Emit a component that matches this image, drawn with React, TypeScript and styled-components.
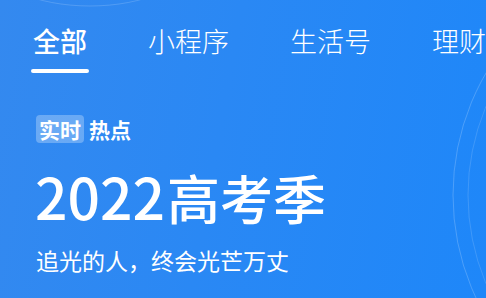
import React from "react";
import styled, { createGlobalStyle } from "styled-components";

const Global = createGlobalStyle`
  html, body { margin: 0; padding: 0; }
  body { font-family: "Noto Sans CJK SC", "Noto Sans", sans-serif; }
`;

const Banner = styled.div`
  position: relative;
  width: 486px;
  height: 298px;
  overflow: hidden;
  background: linear-gradient(100deg, #3489ef 0%, #2a88f4 45%, #1e87f9 100%);
  color: #fff;
  display: flex;
  flex-direction: column;
  padding: 26px 0 0 33px;
  box-sizing: border-box;
`;

const Decor = styled.svg`
  position: absolute;
  inset: 0;
  pointer-events: none;
`;

const Tabs = styled.nav`
  display: flex;
  gap: 61px;
  white-space: nowrap;
`;

const Tab = styled.div<{ $active?: boolean }>`
  position: relative;
  font-size: 27px;
  line-height: 30px;
  font-weight: ${(p) => (p.$active ? 500 : 300)};
  padding-bottom: 17px;
  &::after {
    content: "";
    display: ${(p) => (p.$active ? "block" : "none")};
    position: absolute;
    left: -2px;
    right: -2px;
    bottom: 0;
    height: 4px;
    border-radius: 2px;
    background: #fff;
  }
`;

const Label = styled.div`
  display: flex;
  align-items: center;
  gap: 5px;
  margin: 42px 0 0 3px;
  font-size: 21px;
  font-weight: 700;
  line-height: 28px;
`;

const Badge = styled.span`
  background: rgba(255, 255, 255, 0.28);
  border-radius: 4px;
  padding: 0 3px;
  height: 28px;
  display: inline-flex;
  align-items: center;
`;

const Title = styled.h1`
  margin: 20px 0 0 2px;
  font-size: 57px;
  line-height: 64px;
  font-weight: 500;
`;

const TitleCjk = styled.span`
  font-size: 53px;
  margin-left: 2px;
`;

const Sub = styled.p`
  margin: 16px 0 0 3px;
  font-size: 23px;
  line-height: 30px;
  font-weight: 400;
`;

export default function App() {
  return (
    <>
      <Global />
      <Banner>
        <Decor width="486" height="298" viewBox="0 0 486 298">
          <ellipse cx="90" cy="-40" rx="100" ry="46" fill="none" stroke="rgba(255,255,255,0.16)" strokeWidth="1" />
          <circle cx="695" cy="195" r="242" fill="none" stroke="rgba(255,255,255,0.2)" strokeWidth="1" />
          <circle cx="695" cy="195" r="227" fill="none" stroke="rgba(255,255,255,0.14)" strokeWidth="1" />
        </Decor>
        <Tabs>
          <Tab $active>全部</Tab>
          <Tab>小程序</Tab>
          <Tab>生活号</Tab>
          <Tab>理财</Tab>
        </Tabs>
        <Label>
          <Badge>实时</Badge>
          <span>热点</span>
        </Label>
        <Title>
          2022<TitleCjk>高考季</TitleCjk>
        </Title>
        <Sub>追光的人，终会光芒万丈</Sub>
      </Banner>
    </>
  );
}
